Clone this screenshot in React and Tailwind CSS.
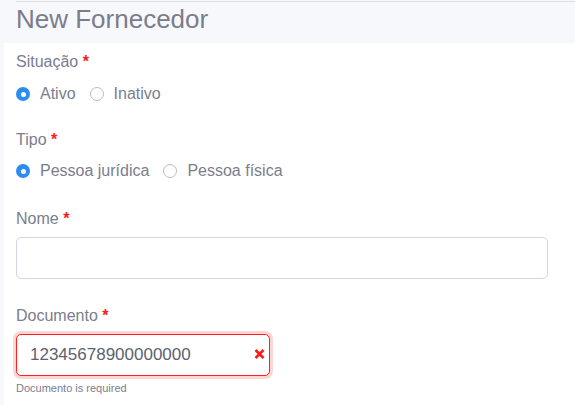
const Radio = ({ checked, label }) => (
  <label className="flex items-center gap-[10px] h-5">
    {checked ? (
      <span className="w-[14px] h-[14px] rounded-full bg-[#2d8cf0] flex items-center justify-center">
        <span className="w-[5px] h-[5px] rounded-full bg-white"></span>
      </span>
    ) : (
      <span className="w-[14px] h-[14px] rounded-full border border-[#b9bcc4] bg-white"></span>
    )}
    <span>{label}</span>
  </label>
);

const Label = ({ children }) => (
  <div className="h-5 leading-5 text-[16px] text-[#7b7d8d]">
    {children} <span className="text-[#ff1a1a] text-[16px] font-bold">*</span>
  </div>
);

export default function App() {
  return (
    <div className="w-[575px] h-[405px] overflow-hidden bg-[#f7f8fb]" style={{ fontFamily: '"Liberation Sans", Arial, sans-serif' }}>
      {/* Header */}
      <div className="h-[42px] pl-4">
        <div className="border-t border-[#dcdde5] mt-px">
          <h1 className="text-[26px] leading-[32px] text-[#7b7c8c] pt-[1px]">New Fornecedor</h1>
        </div>
      </div>

      {/* Form panel */}
      <div className="ml-1 bg-white h-full pl-3 pt-[9px]">
        <Label>Situação</Label>
        <div className="mt-3 flex items-center gap-[14px] text-[16px] text-[#7b7d8d]">
          <Radio checked label="Ativo" />
          <Radio label="Inativo" />
        </div>

        <div className="mt-[26px]">
          <Label>Tipo</Label>
        </div>
        <div className="mt-[11px] flex items-center gap-[14px] text-[16px] text-[#7b7d8d]">
          <Radio checked label="Pessoa jurídica" />
          <Radio label="Pessoa física" />
        </div>

        <div className="mt-[28px]">
          <Label>Nome</Label>
        </div>
        <input
          className="mt-[8px] block w-[532px] h-[42px] rounded-[5px] border border-[#d4d3e3] bg-white outline-none px-[13px] text-[17px] text-[#5c6270]"
          defaultValue=""
        />

        <div className="mt-[27px]">
          <Label>Documento</Label>
        </div>
        <div className="relative mt-[8px] w-[254px] h-[42px] rounded-[5px] border border-[#ff2020] shadow-[0_0_0_3px_rgba(255,40,40,0.2)] bg-white flex items-center pl-[13px]">
          <span className="text-[17px] text-[#5c6270]">12345678900000000</span>
          <svg className="absolute right-[4px] top-[14px]" width="11" height="10" viewBox="0 0 11 10">
            <path d="M1.5 1 L9.5 9 M9.5 1 L1.5 9" stroke="#ff1a1a" strokeWidth="2.6" strokeLinecap="butt" />
          </svg>
        </div>
        <div className="mt-[5px] text-[11px] leading-[14px] text-[#7b7d8d]">Documento is required</div>
      </div>
    </div>
  );
}
